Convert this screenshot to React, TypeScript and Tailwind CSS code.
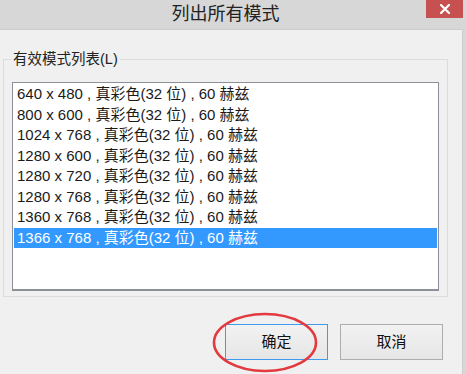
const MODES = [
  '640 x 480',
  '800 x 600',
  '1024 x 768',
  '1280 x 600',
  '1280 x 720',
  '1280 x 768',
  '1360 x 768',
  '1366 x 768',
];

const SELECTED = 7;

function CloseIcon() {
  return (
    <svg width="10" height="10" viewBox="0 0 10 10" className="block">
      <path d="M1 1L9 9M9 1L1 9" stroke="#ffffff" strokeWidth="2.2" strokeLinecap="square" />
    </svg>
  );
}

function DialogButton({ label, focused }: { label: string; focused?: boolean }) {
  return (
    <button
      className={
        focused
          ? 'w-[103px] h-[36px] border border-[#3d9cf0] bg-gradient-to-b from-[#f2f2f2] to-[#e6e6e6] text-[15px] text-[#111]'
          : 'w-[103px] h-[36px] border border-[#adadad] bg-gradient-to-b from-[#f2f2f2] to-[#e6e6e6] text-[15px] text-[#111]'
      }
    >
      {label}
    </button>
  );
}

export default function App() {
  return (
    <div
      className="w-[466px] h-[374px] bg-[#d7d7d7] flex flex-col overflow-hidden"
      style={{ fontFamily: '"Liberation Sans", "Noto Sans CJK SC", sans-serif' }}
    >
      {/* Title bar */}
      <div className="h-[29px] flex shrink-0">
        <div className="flex-1 pl-[25px] text-center text-[18px] leading-[28px] text-[#222]">列出所有模式</div>
        <div className="w-[37px] h-[18px] bg-[#c75050] flex items-center justify-center">
          <CloseIcon />
        </div>
        <div className="w-[3px]" />
      </div>

      {/* Body */}
      <div className="flex-1 mr-[3px] bg-[#f0f0f0] border-t border-r border-[#cdcdcd] relative">
        <fieldset className="ml-[3px] mt-[20px] w-[445px] border border-[#dcdcdc] px-[8px] pb-[5px]">
          <legend className="ml-[-1px] px-[2px] text-[14.5px] leading-[18px] text-[#222]">有效模式列表(L)</legend>
          <div className="mt-[14px] h-[209px] border border-[#8c9099] border-b-2 bg-white px-[1px] pt-[1px]">
            {MODES.map((m, i) => (
              <div
                key={m}
                className={
                  i === SELECTED
                    ? 'h-[20.5px] leading-[20.5px] pl-[3px] text-[15px] whitespace-nowrap bg-[#3399ff] text-white'
                    : 'h-[20.5px] leading-[20.5px] pl-[3px] text-[15px] whitespace-nowrap text-[#1a1a1a]'
                }
              >
                {m} , 真彩色(32 位) , 60 赫兹
              </div>
            ))}
          </div>
        </fieldset>

        <div className="mt-[27px] flex justify-end gap-[12px] pr-[19px] relative">
          <DialogButton label="确定" focused />
          <DialogButton label="取消" />
          {/* red annotation circle */}
          <svg
            className="absolute left-[205px] top-[-18px] pointer-events-none"
            width="120"
            height="72"
            viewBox="0 0 120 72"
          >
            <ellipse cx="60" cy="36.5" rx="51" ry="28.5" fill="none" stroke="#e23a3f" strokeWidth="2.6" />
          </svg>
        </div>
      </div>
    </div>
  );
}
